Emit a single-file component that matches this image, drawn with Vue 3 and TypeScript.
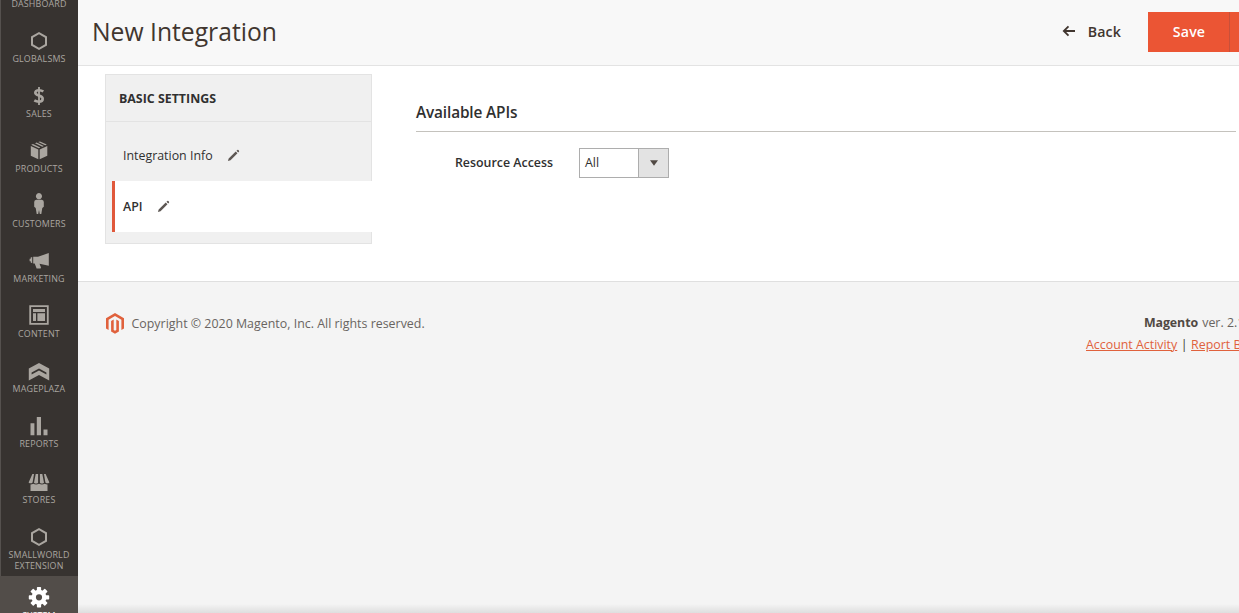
<script setup lang="ts">
interface MenuItem {
  label: string
  icon: string
  active?: boolean
}

const hexagon = 'M12 3 L20 7.5 V16.5 L12 21 L4 16.5 V7.5 Z M12 5.3 L6 8.7 V15.3 L12 18.7 L18 15.3 V8.7 Z'

const menu: MenuItem[] = [
  { label: 'Dashboard', icon: '' },
  { label: 'GlobalSMS', icon: hexagon },
  { label: 'Sales', icon: 'dollar' },
  { label: 'Products', icon: 'M11.2 3.1 L13 2.4 L19.8 5.5 L18.2 6.2 Z M4.2 5.8 L6 5 L13.4 8.4 L11.8 9.3 Z M8 4.3 L9.6 3.6 L16.8 7 L15.3 7.7 Z M3.8 7 L11.3 10.5 V20.3 L3.8 16.7 Z M12.7 10.5 L20.3 7 V16.7 L12.7 20.3 Z' },
  { label: 'Customers', icon: 'M12 -.9 A3.1 3.1 0 1 1 11.9 -.9 Z M9.2 5.7 H14.8 Q16.8 5.9 16.8 8 V12.7 L15.3 13.9 L14.3 19.9 H12.8 L12 15.9 L11.2 19.9 H9.7 L8.7 13.9 L7.2 12.7 V8 Q7.2 5.9 9.2 5.7 Z' },
  { label: 'Marketing', icon: 'M21.8 4 V16.8 L12.5 14.8 L14 18.4 L13.6 19.6 H9.6 L7.7 14.4 H6.2 V7.8 H11 Z M5.2 8 V14.2 L3.7 13.5 V12.3 H2.6 V9.7 H3.7 V8.5 Z' },
  { label: 'Content', icon: 'M2.3 1.3 H21.7 V20.7 H2.3 Z M4.1 3.1 V18.9 H19.9 V3.1 Z M6 5 H18 V8 H6 Z M6 9.3 H9 V17 H6 Z M10.4 9.3 H18 V17 H10.4 Z' },
  { label: 'Mageplaza', icon: 'M12 3.9 L22.2 9.4 V21.4 L12 16 L1.8 21.4 V9.4 Z M12 9.5 L4.6 13.5 V15.5 L12 11.5 L19.4 15.5 V13.5 Z' },
  { label: 'Reports', icon: 'M3.5 9.2 H7.4 V21.2 H3.5 Z M9.8 3 H14 V21.2 H9.8 Z M16.5 15.4 H20.5 V21.2 H16.5 Z' },
  { label: 'Stores', icon: 'M5.4 3.9 H7 L5.6 12.4 Q3.8 14.3 1.6 12.4 Z M8.7 3.9 H11.1 V12.7 Q9.2 14.4 7 12.7 Z M12.9 3.9 H15.3 L17 12.7 Q14.8 14.4 12.9 12.7 Z M17 3.9 H18.6 L22.4 12.4 Q20.2 14.3 18.4 12.4 Z M3.5 14.4 Q5.2 14.4 6.2 13.8 Q9 15.1 12 13.8 Q15 15.1 17.8 13.8 Q18.8 14.4 20.5 14.4 V21 H3.5 Z' },
  { label: 'Smallworld Extension', icon: hexagon },
  { label: 'System', icon: 'gear', active: true },
]

const gearTeeth = [0, 45, 90, 135, 180, 225, 270, 315]
const tabs = [
  { label: 'Integration Info', active: false },
  { label: 'API', active: true },
]
</script>

<template>
  <div class="app">
    <nav class="menu">
      <a v-for="item in menu" :key="item.label" class="menu-item" :class="{ active: item.active }">
        <svg class="menu-icon" viewBox="0 0 24 24">
          <g v-if="item.icon === 'gear'" transform="translate(0 -.7)">
            <rect v-for="a in gearTeeth" :key="a" x="9.9" y="1.8" width="4.2" height="6" rx=".7" :transform="`rotate(${a} 12 12)`" />
            <circle cx="12" cy="12" r="5.3" fill="none" stroke="currentColor" stroke-width="4.4" />
          </g>
          <g v-else-if="item.icon === 'dollar'" fill="none" stroke="currentColor">
            <path d="M16.3 7.6 Q14.6 6.2 12.2 6.2 C8.8 6.2 8.3 7.5 8.3 8.8 C8.3 12.2 15.7 10.7 15.7 14.7 C15.7 16.8 14.1 17.7 11.8 17.7 Q9.4 17.7 7.3 16.4" stroke-width="2.6" />
            <path d="M12 3 V21" stroke-width="1.8" />
          </g>
          <path v-else :d="item.icon" fill-rule="evenodd" />
        </svg>
        <span class="menu-label">{{ item.label }}</span>
      </a>
    </nav>

    <div class="page">
      <header class="header">
        <h1>New Integration</h1>
        <div class="actions">
          <button class="back">
            <svg class="arrow" viewBox="0 0 14 12"><path d="M13 6 H2 M6.5 1.3 L1.8 6 L6.5 10.7" /></svg>
            <span>Back</span>
          </button>
          <button class="save">Save</button>
          <button class="save-toggle" aria-label="More"></button>
        </div>
      </header>

      <main class="content">
        <aside class="tabs">
          <h2>Basic Settings</h2>
          <ul>
            <li v-for="tab in tabs" :key="tab.label" :class="{ active: tab.active }">
              <span>{{ tab.label }}</span>
              <svg class="pencil" viewBox="0 0 14 14"><path d="M1 13 L1.8 10.2 L9.4 2.8 L11.3 4.7 L3.8 12.2 Z M10.2 2 L11.2 1 Q11.8 .7 12.3 1.2 L12.9 1.8 Q13.3 2.3 12.9 2.9 L12 3.8 Z" /></svg>
            </li>
          </ul>
        </aside>
        <section class="form">
          <h3>Available APIs</h3>
          <div class="field">
            <label>Resource Access</label>
            <div class="select">
              <span class="value">All</span>
              <span class="toggle"><svg viewBox="0 0 8 6"><path d="M0 .3 H8 L4 5.8 Z" /></svg></span>
            </div>
          </div>
        </section>
      </main>

      <footer class="footer">
        <div class="copyright">
          <svg class="logo" viewBox="0 0 18 21">
            <path d="M9 0 L18 5.2 V15.6 L15.4 17.1 V6.7 L9 3 L2.6 6.7 V17.1 L0 15.6 V5.2 Z M5.1 8.1 L7.7 6.6 V17 L9 17.8 L10.3 17 V6.6 L12.9 8.1 V18.6 L9 20.8 L5.1 18.6 Z" />
          </svg>
          <span>Copyright © 2020 Magento, Inc. All rights reserved.</span>
        </div>
        <div class="legal">
          <p class="version"><strong>Magento</strong> ver. 2.1</p>
          <p class="links"><a>Account Activity</a><i>|</i><a>Report Bug</a></p>
        </div>
      </footer>
      <div class="edge-shade"></div>
    </div>
  </div>
</template>

<style>
body {
  margin: 0;
  overflow: hidden;
}
</style>

<style scoped>
.app {
  display: flex;
  width: 1239px;
  height: 613px;
  overflow: hidden;
  background: #f4f4f4;
  color: #303030;
  font-family: "Open Sans", "Noto Sans", sans-serif;
  font-size: 12.4px;
}
.menu {
  flex: none;
  width: 78px;
  height: 613px;
  overflow: hidden;
  background: #373330;
  box-shadow: inset 1px 0 #55514e;
}
.menu-item {
  display: flex;
  flex-direction: column;
  align-items: center;
  box-sizing: border-box;
  min-height: 55.1px;
  padding: 9.7px 4px 4.3px;
  color: #aaa6a0;
}
.menu-item:first-child {
  margin-top: -36px;
}
.menu-item.active {
  background: #524d49;
  color: #fff;
}
.menu-icon {
  flex: none;
  width: 24px;
  height: 24px;
  overflow: visible;
  fill: currentColor;
}
.menu-label {
  font-size: 8.9px;
  line-height: 11.5px;
  letter-spacing: .17px;
  text-align: center;
  text-transform: uppercase;
}
.page {
  position: relative;
  flex: none;
  width: 1161px;
  overflow: hidden;
}
.header {
  display: flex;
  align-items: center;
  justify-content: space-between;
  box-sizing: border-box;
  height: 66px;
  padding: 0 0 2px 14px;
  border-bottom: 1px solid #e3e3e3;
  background: #f8f8f8;
}
h1 {
  margin: 0;
  color: #41362f;
  font-size: 24.7px;
  font-weight: 400;
  line-height: 34px;
}
.actions {
  display: flex;
  height: 40px;
}
button {
  border: 0;
  padding: 0;
  font: 600 14.2px "Open Sans", sans-serif;
}
.back {
  display: flex;
  align-items: center;
  gap: 12px;
  margin-right: 27px;
  padding-bottom: 1px;
  background: none;
  color: #41362f;
  letter-spacing: .15px;
}
.arrow {
  width: 14px;
  height: 12px;
  fill: none;
  stroke: #41362f;
  stroke-width: 1.8;
}
.save {
  width: 81px;
  padding: 0 0 1px 1px;
  background: #eb5534;
  color: #fff;
  letter-spacing: .15px;
}
.save-toggle {
  width: 10px;
  border-left: 1px solid #c8503a;
  background: #eb5534;
}
.content {
  display: flex;
  box-sizing: border-box;
  height: 216px;
  padding: 8px 3px 0 27px;
  border-bottom: 1px solid #dfdfdf;
  background: #fff;
}
.tabs {
  box-sizing: border-box;
  flex: none;
  width: 267px;
  height: 170px;
  margin-right: 44px;
  border: 1px solid #e3e3e3;
  background: #f0f0f0;
}
h2 {
  box-sizing: border-box;
  height: 47px;
  margin: 0;
  padding-left: 13px;
  border-bottom: 1px solid #e3e3e3;
  font-size: 12.4px;
  font-weight: 700;
  line-height: 47px;
  text-transform: uppercase;
}
ul {
  margin: 8px -1px 0 6px;
  padding: 0;
  list-style: none;
}
li {
  display: flex;
  align-items: center;
  box-sizing: border-box;
  height: 51px;
  padding-left: 11px;
}
li.active {
  padding-left: 8px;
  border-left: 3px solid #e0583b;
  background: #fff;
  font-weight: 600;
}
.pencil {
  width: 13px;
  height: 13px;
  margin-left: 14px;
  fill: #5d5753;
}
.form {
  flex: 1;
}
h3 {
  box-sizing: border-box;
  height: 58px;
  margin: 0 0 16px;
  padding-top: 27px;
  border-bottom: 1px solid #c4c2bd;
  font-size: 15.4px;
  font-weight: 600;
  letter-spacing: -.15px;
  line-height: 24px;
}
.field {
  display: flex;
  align-items: center;
}
label {
  width: 137px;
  margin-right: 26px;
  padding-bottom: 1px;
  font-weight: 600;
  text-align: right;
}
.select {
  display: flex;
  box-sizing: border-box;
  width: 90px;
  height: 30px;
  border: 1px solid #adadad;
}
.value {
  flex: 1;
  padding-left: 5px;
  line-height: 28px;
}
.toggle {
  display: flex;
  align-items: center;
  justify-content: center;
  width: 29px;
  border-left: 1px solid #adadad;
  background: #e3e3e3;
}
.toggle svg {
  width: 8px;
  height: 6px;
  fill: #514943;
}
.footer {
  display: flex;
  justify-content: space-between;
  padding: 30px 0 0 27.5px;
  color: #696461;
}
.copyright {
  display: flex;
  align-items: center;
  gap: 8px;
  height: 22px;
  letter-spacing: .01px;
}
.logo {
  width: 18px;
  height: 21px;
  fill: #e0613c;
}
.legal {
  width: 153px;
  white-space: nowrap;
}
p {
  margin: 0;
  line-height: 22px;
}
.version {
  padding-left: 58px;
}
.version strong {
  margin-right: 1px;
  font-weight: 700;
  letter-spacing: -.1px;
  color: #514943;
}
.links a {
  color: #e0613c;
  text-decoration: underline;
}
.links i {
  margin: 0 3.5px;
  color: #41362f;
  font-style: normal;
}
.edge-shade {
  position: absolute;
  right: 0;
  bottom: 0;
  left: 0;
  height: 9px;
  background: linear-gradient(rgba(0, 0, 0, 0), rgba(0, 0, 0, .09));
}
</style>
